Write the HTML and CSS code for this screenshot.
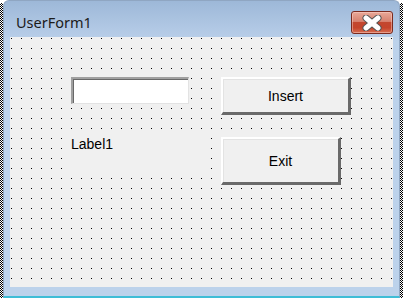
FILE: index.html
```html
<!DOCTYPE html>
<html lang="en">
<head>
  <meta charset="UTF-8">
  <title>UserForm1</title>
  <link rel="stylesheet" href="styles.css">
</head>
<body>
  <div class="stage">
    <div class="hatch"></div>

    <div class="window">
      <div class="titlebar">
        <span class="title">UserForm1</span>
        <button class="close" aria-label="Close">
          <svg width="20" height="16" viewBox="0 0 20 16">
            <path d="M4 3 L16 13 M16 3 L4 13" stroke="#555" stroke-width="7" stroke-linecap="round"/>
            <path d="M4 3 L16 13 M16 3 L4 13" stroke="#fff" stroke-width="5" stroke-linecap="round"/>
          </svg>
        </button>
      </div>

      <div class="client">
        <div class="col-left">
          <div class="textbox"></div>
          <div class="label">Label1</div>
        </div>
        <div class="col-right">
          <div class="btn btn-insert">Insert</div>
          <div class="btn btn-exit">Exit</div>
        </div>
      </div>
    </div>

    <div class="hatch"></div>
  </div>
</body>
</html>
```

FILE: styles.css
```css
body {
  margin: 0;
  background: #fff;
  font-family: "Liberation Sans", Arial, sans-serif;
}

.stage {
  display: flex;
  width: 403px;
  height: 298px;
}

/* selection handles around the designer form */
.hatch {
  width: 3px;
  margin-top: 3px;
  background: repeating-conic-gradient(#000 0 25%, #fff 0 50%) 0 0 / 2px 2px;
}

.window {
  width: 397px;
  display: flex;
  flex-direction: column;
  border: 1px solid #8fa6c2;
  border-bottom: 2px solid #3fbdd6;
  border-radius: 6px 6px 0 0;
  background: linear-gradient(to bottom, #9db8d8 0, #b6cce7 34px, #bcd2eb 40px, #bcd2eb 100%);
  padding: 0 6px 9px 6px;
  box-sizing: border-box;
}

.titlebar {
  height: 36px;
  display: flex;
  align-items: flex-start;
  justify-content: space-between;
}

.title {
  font-family: "Noto Sans", "Open Sans", sans-serif;
  font-size: 14.5px;
  color: #1b1b1b;
  margin: 11px 0 0 6px;
}

.close {
  width: 42px;
  height: 23px;
  margin-top: 10px;
  padding: 0;
  border: 1px solid #7b2b1f;
  border-radius: 3px;
  background: linear-gradient(to bottom, #e9a999 0, #d7826f 45%, #c3472f 50%, #c5442b 75%, #d86f53 100%);
  box-shadow: inset 0 0 0 1px rgba(255, 220, 210, 0.45);
  display: flex;
  align-items: center;
  justify-content: center;
}

/* designer grid: one dot every 10px */
.client {
  flex: 1;
  display: flex;
  background-color: #f0f0f0;
  background-image: url("data:image/svg+xml,%3Csvg xmlns='http://www.w3.org/2000/svg' width='10' height='10'%3E%3Crect x='1' y='1' width='1' height='1' fill='%23000'/%3E%3C/svg%3E");
  background-size: 10px 10px;
  padding: 40px 0 0 56px;
}

.col-left {
  display: flex;
  flex-direction: column;
  width: 140px;
}

.textbox {
  width: 115px;
  height: 24px;
  margin-left: 5px;
  background: #fff;
  border-style: solid;
  border-width: 2px 1px 1px 2px;
  border-color: #a0a0a0 #e3e3e3 #e3e3e3 #a0a0a0;
  box-shadow: inset 1px 1px 0 #696969;
}

.label {
  margin-top: 27px;
  height: 40px;
  padding: 5px 0 0 5px;
  box-sizing: border-box;
  background: #f0f0f0;
  font-size: 14px;
  color: #000;
}

.col-right {
  display: flex;
  flex-direction: column;
  gap: 22px;
  margin-left: 15px;
}

.btn {
  display: flex;
  align-items: center;
  justify-content: center;
  box-sizing: border-box;
  background: #f0f0f0;
  border-style: solid;
  border-width: 2px 3px 3px 2px;
  border-color: #fff #6a6a6a #6a6a6a #fff;
  box-shadow: inset 1px 1px 0 #e3e3e3;
  font-size: 14px;
  color: #000;
}

.btn-insert {
  width: 130px;
  height: 38px;
}

.btn-exit {
  width: 120px;
  height: 48px;
}
```
